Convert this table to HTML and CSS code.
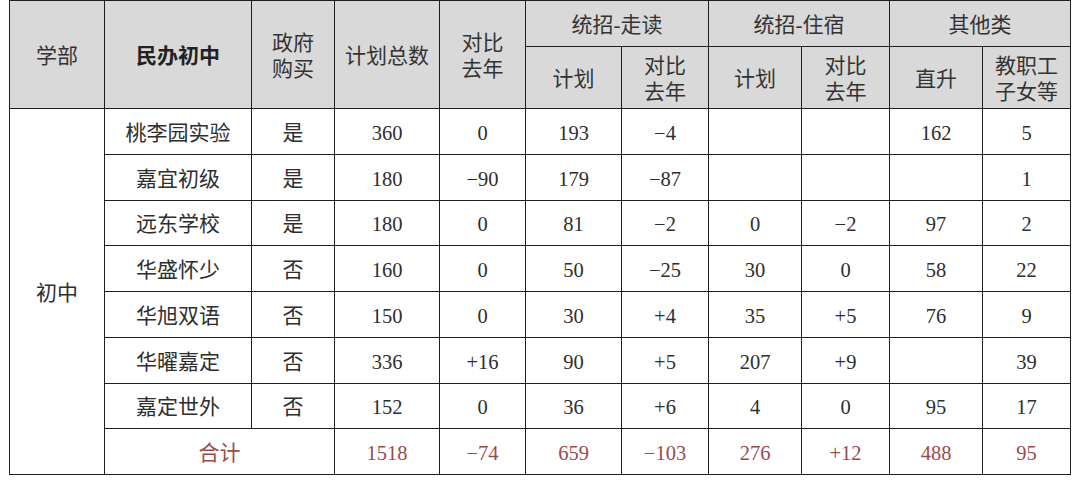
FILE: index.html
```html
<!DOCTYPE html>
<html lang="zh">
<head>
<meta charset="utf-8">
<link rel="stylesheet" href="styles.css">
</head>
<body>
<table class="tbl">
  <colgroup>
    <col style="width:95px"><col style="width:147px"><col style="width:83px"><col style="width:105px"><col style="width:86px"><col style="width:96px"><col style="width:87px"><col style="width:93px"><col style="width:88px"><col style="width:93px"><col style="width:88px">
  </colgroup>
  <thead>
    <tr class="h1">
      <th rowspan="2">学部</th>
      <th rowspan="2" class="bold">民办初中</th>
      <th rowspan="2">政府<br>购买</th>
      <th rowspan="2">计划总数</th>
      <th rowspan="2">对比<br>去年</th>
      <th colspan="2">统招-走读</th>
      <th colspan="2">统招-住宿</th>
      <th colspan="2">其他类</th>
    </tr>
    <tr class="h2">
      <th>计划</th>
      <th>对比<br>去年</th>
      <th>计划</th>
      <th>对比<br>去年</th>
      <th>直升</th>
      <th>教职工<br>子女等</th>
    </tr>
  </thead>
  <tbody>
    <tr><td rowspan="8" class="zh">初中</td><td class="zh">桃李园实验</td><td class="zh">是</td><td>360</td><td>0</td><td>193</td><td>−4</td><td></td><td></td><td>162</td><td>5</td></tr>
    <tr><td class="zh">嘉宜初级</td><td class="zh">是</td><td>180</td><td>−90</td><td>179</td><td>−87</td><td></td><td></td><td></td><td>1</td></tr>
    <tr><td class="zh">远东学校</td><td class="zh">是</td><td>180</td><td>0</td><td>81</td><td>−2</td><td>0</td><td>−2</td><td>97</td><td>2</td></tr>
    <tr><td class="zh">华盛怀少</td><td class="zh">否</td><td>160</td><td>0</td><td>50</td><td>−25</td><td>30</td><td>0</td><td>58</td><td>22</td></tr>
    <tr><td class="zh">华旭双语</td><td class="zh">否</td><td>150</td><td>0</td><td>30</td><td>+4</td><td>35</td><td>+5</td><td>76</td><td>9</td></tr>
    <tr><td class="zh">华曜嘉定</td><td class="zh">否</td><td>336</td><td>+16</td><td>90</td><td>+5</td><td>207</td><td>+9</td><td></td><td>39</td></tr>
    <tr><td class="zh">嘉定世外</td><td class="zh">否</td><td>152</td><td>0</td><td>36</td><td>+6</td><td>4</td><td>0</td><td>95</td><td>17</td></tr>
    <tr class="total"><td colspan="2" class="zh">合计</td><td>1518</td><td>−74</td><td>659</td><td>−103</td><td>276</td><td>+12</td><td>488</td><td>95</td></tr>
  </tbody>
</table>
</body>
</html>
```

FILE: styles.css
```css
html, body {
  margin: 0;
  padding: 0;
  background: #ffffff;
}
body {
  padding: 0 0 0 9px;
  font-family: "Liberation Serif", "Noto Sans CJK SC", serif;
  color: #2e2e2e;
}
.tbl {
  border-collapse: collapse;
  table-layout: fixed;
  width: 1061px;
  font-size: 20.5px;
}
.tbl th,
.tbl td {
  border: 1.5px solid #1e1e1e;
  text-align: center;
  vertical-align: middle;
  padding: 3px 0 0;
  line-height: 26px;
}
.tbl th {
  background: #d9d9d9;
  font-weight: normal;
  font-size: 21px;
  color: #333333;
}
.tbl td.zh {
  font-size: 21px;
}
.tbl th.bold {
  font-weight: bold;
  color: #222222;
}
.h1 { height: 46px; }
.h2 { height: 62px; }
.tbl tbody tr { height: 45.75px; }
.total td {
  color: #9a4b4a;
}
```
